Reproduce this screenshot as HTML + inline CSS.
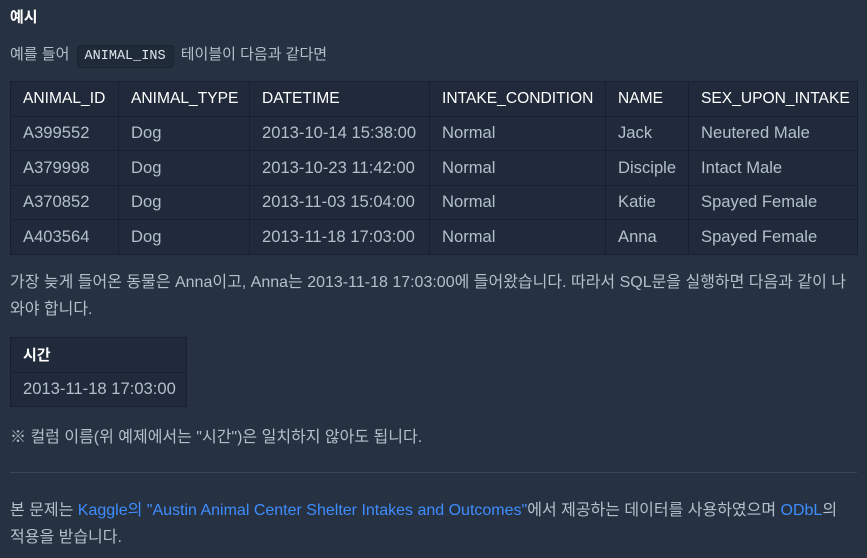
<!DOCTYPE html>
<html><head><meta charset="utf-8"><style>
body{margin:0;background:#263241;width:867px;height:558px;overflow:hidden;font-family:"Liberation Sans","Noto Sans CJK KR",sans-serif;color:#b2c0cc;font-size:16px;}
.a{position:absolute;left:10px;white-space:nowrap}
h5{position:absolute;left:10px;top:6px;margin:0;font-size:15px;color:#fff;font-weight:bold}
code{font-family:"Liberation Mono",monospace;font-size:13.5px;background:#202b3a;border:1px solid #1a2330;border-radius:4px;padding:3px 7px;color:#e0e6ec;margin:0 3px}
table{position:absolute;left:10px;border-collapse:collapse;background:#202a3a;font-size:16.6px;table-layout:fixed}
td,th{border:1px solid #162030;padding:0 12px;height:33.5px;text-align:left;white-space:nowrap;overflow:hidden}
th{color:#fff;font-weight:normal;font-size:15.6px}
hr{position:absolute;left:10px;top:472px;width:847px;margin:0;border:0;border-top:1px solid #3a4656}
a{color:#3f8cff;text-decoration:none}
</style></head><body>
<h5>예시</h5>
<div class="a" style="top:43px;font-size:15px">예를 들어 <code>ANIMAL_INS</code> 테이블이 다음과 같다면</div>
<table style="top:81px;width:847px">
<colgroup><col style="width:108px"><col style="width:131px"><col style="width:180px"><col style="width:176px"><col style="width:83px"><col style="width:169px"></colgroup>
<tr><th>ANIMAL_ID</th><th>ANIMAL_TYPE</th><th>DATETIME</th><th>INTAKE_CONDITION</th><th>NAME</th><th>SEX_UPON_INTAKE</th></tr>
<tr><td>A399552</td><td>Dog</td><td>2013-10-14 15:38:00</td><td>Normal</td><td>Jack</td><td>Neutered Male</td></tr>
<tr><td>A379998</td><td>Dog</td><td>2013-10-23 11:42:00</td><td>Normal</td><td>Disciple</td><td>Intact Male</td></tr>
<tr><td>A370852</td><td>Dog</td><td>2013-11-03 15:04:00</td><td>Normal</td><td>Katie</td><td>Spayed Female</td></tr>
<tr><td>A403564</td><td>Dog</td><td>2013-11-18 17:03:00</td><td>Normal</td><td>Anna</td><td>Spayed Female</td></tr>
</table>
<div class="a" style="top:269px;line-height:27px">가장 늦게 들어온 동물은 Anna이고, Anna는 2013-11-18 17:03:00에 들어왔습니다. 따라서 SQL문을 실행하면 다음과 같이 나<br>와야 합니다.</div>
<table style="top:337px;width:177px">
<tr><th style="font-weight:bold;font-size:15px">시간</th></tr>
<tr><td>2013-11-18 17:03:00</td></tr>
</table>
<div class="a" style="top:423px">※ 컬럼 이름(위 예제에서는 "시간")은 일치하지 않아도 됩니다.</div>
<hr>
<div class="a" style="top:497px;line-height:27px">본 문제는 <a>Kaggle의 "Austin Animal Center Shelter Intakes and Outcomes"</a>에서 제공하는 데이터를 사용하였으며 <a>ODbL</a>의<br>적용을 받습니다.</div>
</body></html>
